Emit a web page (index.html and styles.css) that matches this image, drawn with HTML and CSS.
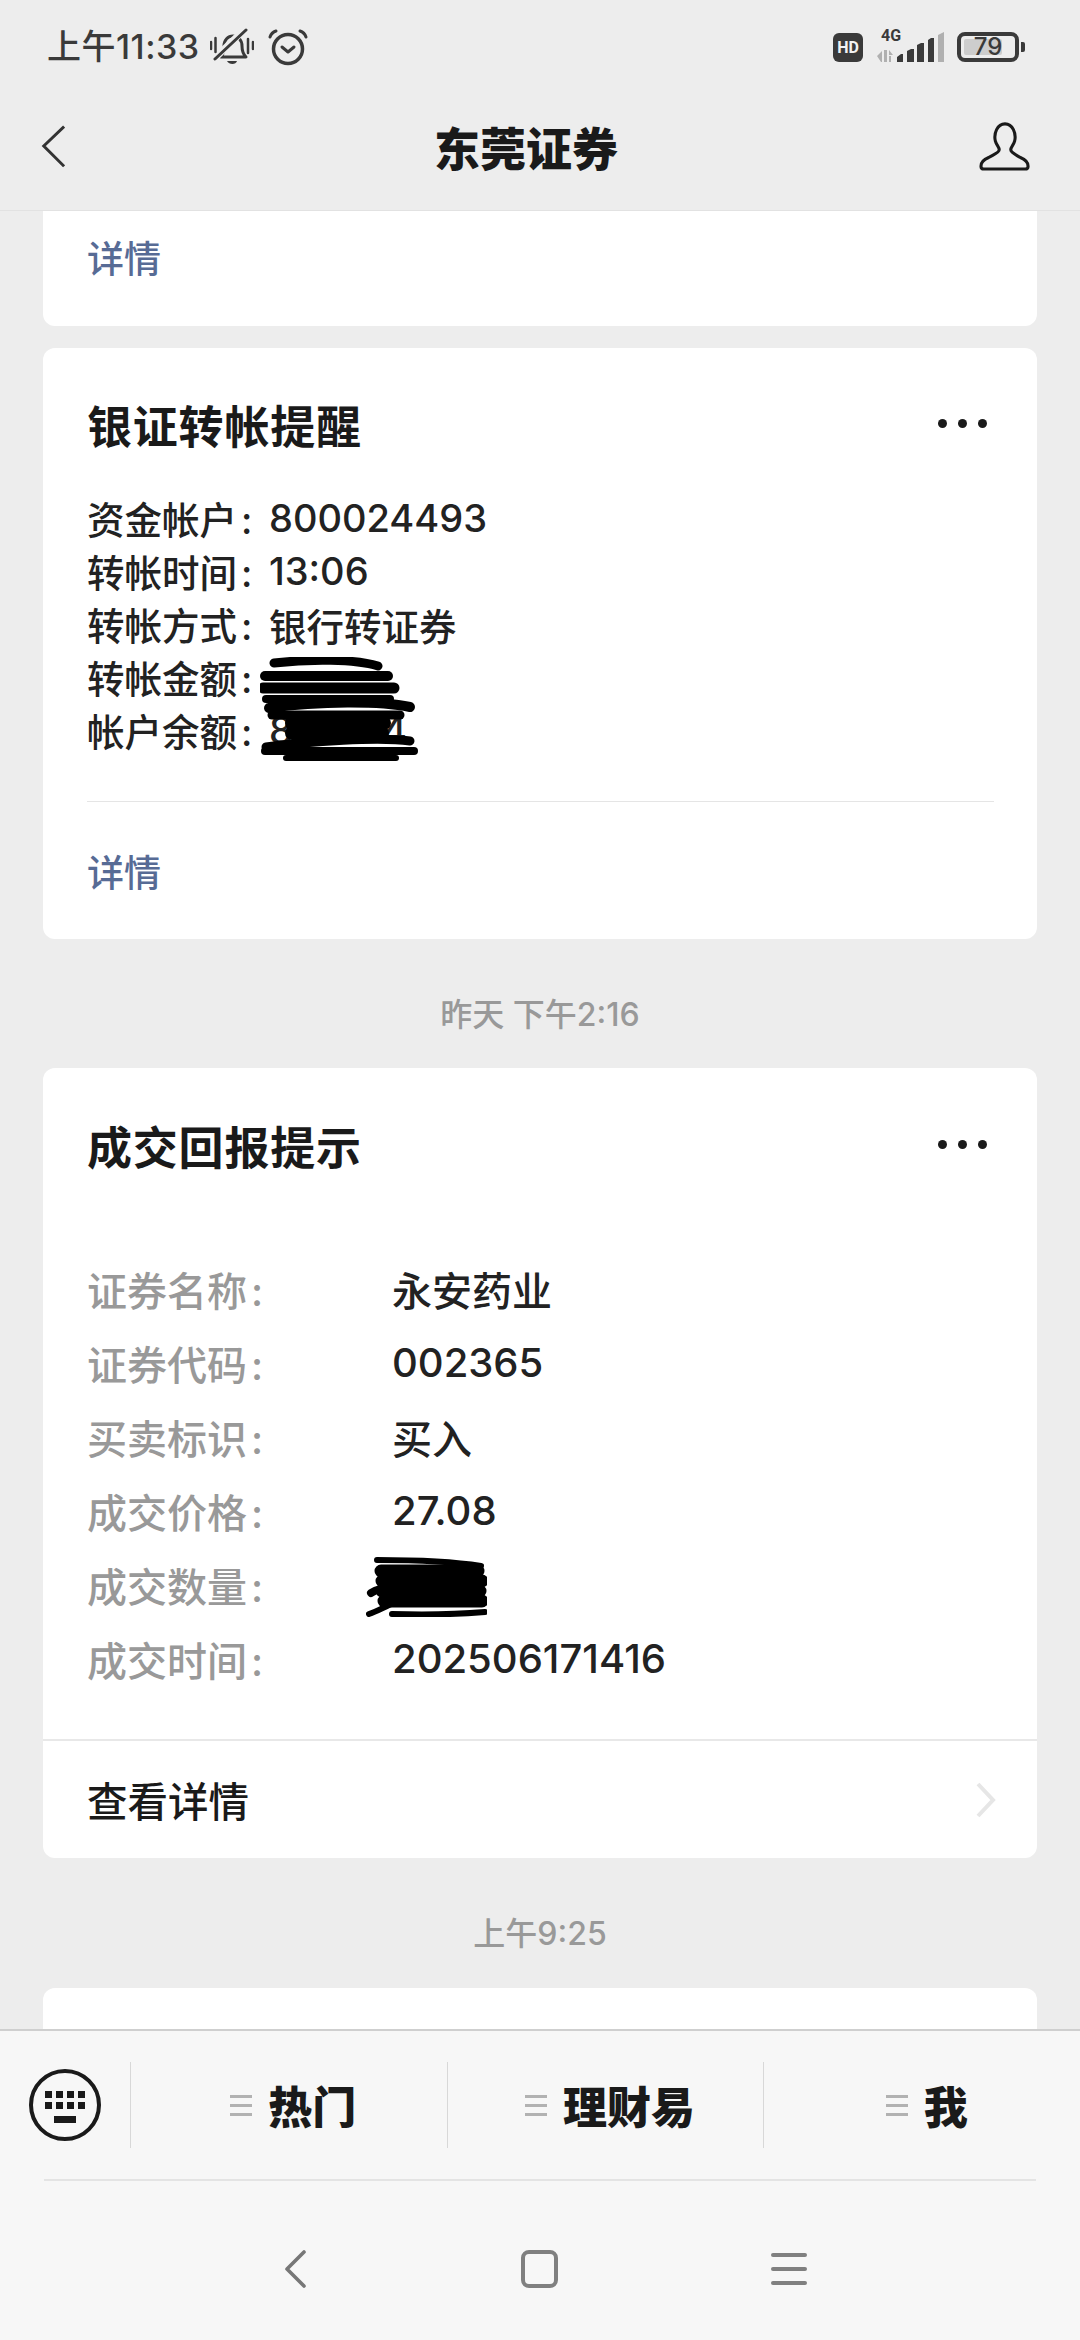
FILE: index.html
```html
<!DOCTYPE html>
<html lang="zh-CN">
<head>
<meta charset="utf-8">
<title>东莞证券</title>
<link rel="stylesheet" href="styles.css">
</head>
<body>
<div class="screen">
  <header class="top">
    <div class="status">
      <div class="status-left">
        <span class="clock">上午11:33</span>
        <svg class="ic-bell" viewBox="0 0 44 38"><path d="M11 29c3-3 3-7 3-11 0-6 4-10 9-10s9 4 9 10c0 4 1 8 4 11z" fill="none" stroke="#3a3a3a" stroke-width="3" stroke-linejoin="round"/><path d="M17 33h10c-1 4-8 4-10 0z" fill="#3a3a3a"/><path d="M4 31 L35 1" stroke="#ededed" stroke-width="7"/><path d="M5 31 L36 2" stroke="#3a3a3a" stroke-width="3" stroke-linecap="round"/><path d="M1 14v7M5.500 10v14M38 11v14M43 14v7" stroke="#3a3a3a" stroke-width="2.500" stroke-linecap="round"/></svg>
        <svg class="ic-alarm" viewBox="0 0 40 38"><circle cx="20" cy="21" r="14.500" fill="none" stroke="#3a3a3a" stroke-width="3.500"/><path d="M14 19l6 5 6-5" fill="none" stroke="#3a3a3a" stroke-width="3" stroke-linecap="round" stroke-linejoin="round"/><path d="M2 9c1-3 3-5 6-6M38 9c-1-3-3-5-6-6" fill="none" stroke="#3a3a3a" stroke-width="3" stroke-linecap="round"/></svg>
      </div>
      <div class="status-right">
        <span class="hd">HD</span>
        <div class="signal">
          <span class="net">4G</span>
          <svg class="ic-signal" viewBox="0 0 67 30"><path d="M0 24l5-5v11h-1zM7 18h3v12H7zM12 18l4 5h-4zM12 24h2v6h-2z" fill="#b0b0b0"/><path d="M20 25l4-3h2v8h-6zM30 19l4-2h3v13h-7zM40 13l4-2h3v19h-7zM51 8l3-2h3v24h-6z" fill="#3a3a3a"/><path d="M61 3l6-3v30h-6z" fill="#b0b0b0"/></svg>
        </div>
        <div class="battery">
          <span class="battery-body"><span class="battery-fill"></span><span class="battery-num">79</span></span>
          <span class="battery-tip"></span>
        </div>
      </div>
    </div>
    <nav class="navbar">
      <svg class="ic-back" viewBox="0 0 26 46"><path d="M25 2 L3 23 L25 45" fill="none" stroke="#333" stroke-width="3.200"/></svg>
      <h1 class="page-title">东莞证券</h1>
      <svg class="ic-user" viewBox="0 0 54 52"><path d="M21 30c0-3-3-5-4-9-2-8 2-18 10-18s12 10 10 18c-1 4-4 6-4 9 0 3 5 5 10 8 5 2 8 5 8 9 0 2-1 3-3 3H5c-2 0-3-1-3-3 0-4 3-7 8-9 5-3 11-5 11-8z" fill="none" stroke="#1a1a1a" stroke-width="3.200" stroke-linejoin="round"/></svg>
    </nav>
  </header>

  <main class="feed">
    <section class="card card-tail">
      <a class="link">详情</a>
    </section>

    <section class="card card-notice">
      <div class="card-head">
        <h2 class="card-title">银证转帐提醒</h2>
        <span class="more"><i></i><i></i><i></i></span>
      </div>
      <div class="notice-lines">
        <div class="nline"><span class="nlabel">资金帐户<span class="colon">:</span></span><span class="num">800024493</span></div>
        <div class="nline"><span class="nlabel">转帐时间<span class="colon">:</span></span><span class="num">13:06</span></div>
        <div class="nline"><span class="nlabel">转帐方式<span class="colon">:</span></span><span>银行转证券</span></div>
        <div class="nline"><span class="nlabel">转帐金额<span class="colon">:</span></span></div>
        <div class="nline"><span class="nlabel">帐户余额<span class="colon">:</span></span><span class="num peek"><span>8</span><span>4</span></span></div>
        <svg class="scribble-a" viewBox="0 0 160 105"><g fill="none" stroke="#000" stroke-linecap="round" stroke-linejoin="round"><path d="M14 6 C50 2 95 2 118 9" stroke-width="9"/><path d="M5 19 H128" stroke-width="10"/><path d="M3 31 H134" stroke-width="11"/><path d="M6 42 H130" stroke-width="8"/><path d="M9 51 C60 44 120 44 150 50" stroke-width="10"/><path d="M12 58 H140" stroke-width="9"/><path d="M32 66 H124 M32 76 H122" stroke-width="14"/><path d="M6 90 C50 84 120 80 150 84" stroke-width="9"/><path d="M5 94 H154" stroke-width="8"/><path d="M26 101 H136" stroke-width="6"/></g></svg>
      </div>
      <div class="rule"></div>
      <a class="link link-bottom">详情</a>
    </section>

    <time class="stamp">昨天 下午2:16</time>

    <section class="card card-deal">
      <div class="card-head">
        <h2 class="card-title">成交回报提示</h2>
        <span class="more"><i></i><i></i><i></i></span>
      </div>
      <dl class="deal-grid">
        <dt>证券名称<span class="colon">:</span></dt><dd>永安药业</dd>
        <dt>证券代码<span class="colon">:</span></dt><dd class="num">002365</dd>
        <dt>买卖标识<span class="colon">:</span></dt><dd>买入</dd>
        <dt>成交价格<span class="colon">:</span></dt><dd class="num">27.08</dd>
        <dt>成交数量<span class="colon">:</span></dt>
        <dd><svg class="scribble-b" viewBox="0 0 121 60"><g fill="none" stroke="#000" stroke-linecap="round" stroke-linejoin="round"><path d="M11 3 C50 3 90 5 115 9" stroke-width="6"/><path d="M15 14 H112 M16 24 H116 M16 34 H114 M18 44 H116" stroke-width="13"/><path d="M5 36 C12 31 20 31 30 30" stroke-width="8"/><path d="M3 57 C12 54 20 49 28 46" stroke-width="6"/><path d="M26 57 C60 58 95 57 119 55" stroke-width="6"/></g></svg></dd>
        <dt>成交时间<span class="colon">:</span></dt><dd class="num">202506171416</dd>
      </dl>
      <div class="deal-foot">
        <span>查看详情</span>
        <svg class="ic-chevron" viewBox="0 0 20 36"><path d="M2 2 L17 18 L2 34" fill="none" stroke="#e6e6e6" stroke-width="4"/></svg>
      </div>
    </section>

    <time class="stamp stamp-morning">上午9:25</time>

    <section class="card card-next"></section>
  </main>

  <footer class="dock">
    <div class="menu">
      <div class="kbd-cell">
        <svg class="ic-kbd" viewBox="0 0 72 72"><circle cx="36" cy="36" r="34" fill="none" stroke="#1a1a1a" stroke-width="4"/><g fill="#1a1a1a"><rect x="16" y="22" width="7" height="7"/><rect x="27" y="22" width="7" height="7"/><rect x="38" y="22" width="7" height="7"/><rect x="49" y="22" width="7" height="7"/><rect x="16" y="33" width="7" height="7"/><rect x="27" y="33" width="7" height="7"/><rect x="38" y="33" width="7" height="7"/><rect x="49" y="33" width="7" height="7"/><rect x="25" y="47" width="22" height="7"/></g></svg>
      </div>
      <div class="menu-item"><span class="bars"><i></i><i></i><i></i></span><span>热门</span></div>
      <div class="menu-item"><span class="bars"><i></i><i></i><i></i></span><span>理财易</span></div>
      <div class="menu-item"><span class="bars"><i></i><i></i><i></i></span><span>我</span></div>
    </div>
    <div class="dock-rule"></div>
    <div class="sysnav">
      <svg class="sys-back" viewBox="0 0 22 38"><path d="M20 2 L3 19 L20 36" fill="none" stroke="#777" stroke-width="3.600" stroke-linecap="round" stroke-linejoin="round"/></svg>
      <span class="sys-home"></span>
      <span class="sys-menu"><i></i><i></i><i></i></span>
    </div>
  </footer>
</div>
</body>
</html>
```
FILE: styles.css
```css
* { box-sizing: border-box; }

html, body {
  margin: 0;
  padding: 0;
}

body {
  width: 1080px;
  height: 2340px;
  overflow: hidden;
  background: #ededed;
  color: #1a1a1a;
  font-family: "Noto Sans CJK SC", sans-serif;
}

h1, h2, dl, dd, dt { margin: 0; }

.screen {
  display: flex;
  flex-direction: column;
  height: 2340px;
}

/* header */
.top {
  flex: none;
  height: 211px;
  background: #ededed;
  border-bottom: 1px solid #e2e2e2;
}

.status {
  height: 82px;
  padding: 12px 55px 0 47px;
  display: flex;
  align-items: center;
  justify-content: space-between;
}

.status-left,
.status-right {
  display: flex;
  align-items: center;
}

.clock {
  font: 500 34px/48px Inter, "Noto Sans CJK SC", sans-serif;
  letter-spacing: 0.500px;
  color: #3a3a3a;
}

.ic-bell { width: 44px; height: 38px; margin-left: 10px; }
.ic-alarm { width: 40px; height: 38px; margin-left: 14px; }

.hd {
  width: 30px;
  height: 29px;
  border-radius: 6px;
  background: #3a3a3a;
  color: #f2f2f2;
  font: 700 16px/29px Roboto, sans-serif;
  text-align: center;
}

.signal {
  position: relative;
  width: 67px;
  height: 30px;
  margin-left: 14px;
}

.net {
  position: absolute;
  left: 4px;
  top: -4px;
  font: 700 16px/16px Roboto, sans-serif;
  color: #3a3a3a;
}

.ic-signal { display: block; width: 67px; height: 30px; }

.battery {
  display: flex;
  align-items: center;
  margin-left: 13px;
}

.battery-body {
  position: relative;
  display: block;
  width: 62px;
  height: 30px;
  border: 4px solid #3a3a3a;
  border-radius: 8px;
}

.battery-fill {
  position: absolute;
  left: 3px;
  top: 3px;
  bottom: 3px;
  width: 38px;
  background: #cdcdcd;
  border-radius: 2px;
}

.battery-num {
  position: absolute;
  inset: 0;
  font: 500 24px/22px Inter, sans-serif;
  text-align: center;
  color: #3a3a3a;
}

.battery-tip {
  width: 4px;
  height: 10px;
  margin-left: 2px;
  background: #3a3a3a;
  border-radius: 0 2px 2px 0;
}

.navbar {
  height: 128px;
  padding: 0 49px 0 41px;
  display: flex;
  align-items: center;
}

.ic-back { width: 24px; height: 44px; flex: none; }
.ic-user { width: 52px; height: 50px; flex: none; }

.page-title {
  flex: 1;
  padding-left: 8px;
  text-align: center;
  font: 900 46px/60px "Noto Sans CJK SC", sans-serif;
  color: #1a1a1a;
}

/* message feed */
.feed {
  flex: 1;
  min-height: 0;
  overflow: hidden;
  padding: 0 43px;
}

.card {
  background: #fff;
  border-radius: 12px;
}

.card-tail {
  height: 115px;
  padding-top: 17px;
  border-radius: 0 0 12px 12px;
  margin-bottom: 22px;
}

.link {
  display: block;
  padding-left: 44px;
  font: 500 37px/58px "Noto Sans CJK SC", sans-serif;
  color: #576b95;
}

.card-notice {
  height: 591px;
  padding: 38px 0 0 44px;
}

.card-head {
  height: 78px;
  display: flex;
  align-items: center;
  justify-content: space-between;
  padding: 0 50px 0 0;
}

.card-title {
  font: 700 45px/60px "Noto Sans CJK SC", sans-serif;
  letter-spacing: 0.800px;
  color: #1a1a1a;
}

.more {
  display: flex;
  gap: 11px;
  margin-top: -3px;
}

.more i {
  width: 9px;
  height: 9px;
  border-radius: 50%;
  background: #1a1a1a;
}

.notice-lines {
  position: relative;
  margin-top: 28px;
  width: 700px;
}

.nline {
  display: flex;
  height: 53px;
  align-items: center;
  font: 500 37.500px/53px "Noto Sans CJK SC", sans-serif;
  color: #222;
}

.nlabel {
  width: 182px;
  flex: none;
}

.colon {
  margin-left: 4px;
  font-family: Inter, sans-serif;
}

.num { font-family: Inter, "Noto Sans CJK SC", sans-serif; }

.nline .num { font-size: 38px; }

.peek {
  display: flex;
  width: 138px;
  justify-content: space-between;
}

.scribble-a {
  position: absolute;
  left: 173px;
  top: 165px;
  width: 160px;
  height: 105px;
}

.rule {
  margin: 44px 43px 0 0;
  height: 1px;
  background: #e5e5e5;
}

.link-bottom {
  padding-left: 0;
  margin-top: 40px;
}

.stamp {
  display: block;
  height: 129px;
  padding-top: 53px;
  text-align: center;
  font: 500 32px/46px Inter, "Noto Sans CJK SC", sans-serif;
  color: #999;
}

.card-deal {
  height: 790px;
  padding-top: 39px;
}

.card-deal .card-head { padding-left: 44px; }

.deal-grid {
  display: grid;
  grid-template-columns: 305px 1fr;
  grid-auto-rows: 74px;
  margin-top: 67px;
  padding-left: 44px;
  font: 500 40px/74px "Noto Sans CJK SC", sans-serif;
}

.deal-grid dt { color: #999; }
.deal-grid dd { position: relative; color: #222; }

.scribble-b {
  position: absolute;
  left: -26px;
  top: 9px;
  width: 121px;
  height: 60px;
}

.deal-foot {
  height: 119px;
  margin-top: 43px;
  padding: 0 41px 0 44px;
  border-top: 2px solid #e8e8e8;
  display: flex;
  align-items: center;
  justify-content: space-between;
  font: 500 40.500px/60px "Noto Sans CJK SC", sans-serif;
}

.ic-chevron { width: 20px; height: 36px; }

.stamp-morning { height: 130px; }

.card-next {
  height: 200px;
}

/* bottom bar */
.dock {
  flex: none;
  height: 311px;
  background: #f7f7f7;
  border-top: 2px solid #cfcfcf;
}

.menu {
  display: flex;
  height: 86px;
  margin-top: 31px;
}

.kbd-cell {
  width: 130px;
  flex: none;
  display: flex;
  align-items: center;
  justify-content: center;
}

.ic-kbd { width: 72px; height: 72px; }

.menu-item {
  flex: 1;
  padding-left: 9px;
  display: flex;
  align-items: center;
  justify-content: center;
  gap: 16px;
  border-left: 1px solid #d8d8d8;
  font: 900 44px/60px "Noto Sans CJK SC", sans-serif;
  color: #1a1a1a;
}

.bars {
  display: flex;
  flex-direction: column;
  gap: 6px;
  width: 22px;
}

.bars i {
  display: block;
  height: 3px;
  background: #b2b2b2;
}

.dock-rule {
  height: 2px;
  margin: 31px 44px 0;
  background: #e4e4e4;
}

.sysnav {
  position: relative;
  height: 128px;
}

.sys-back {
  position: absolute;
  left: 284px;
  top: 69px;
  width: 22px;
  height: 38px;
}

.sys-home {
  position: absolute;
  left: 521px;
  top: 69px;
  width: 37px;
  height: 38px;
  border: 4px solid #808080;
  border-radius: 8px;
}

.sys-menu {
  position: absolute;
  left: 771px;
  top: 72px;
  width: 36px;
  display: flex;
  flex-direction: column;
  gap: 10px;
}

.sys-menu i {
  height: 4px;
  background: #808080;
  border-radius: 2px;
}
```
